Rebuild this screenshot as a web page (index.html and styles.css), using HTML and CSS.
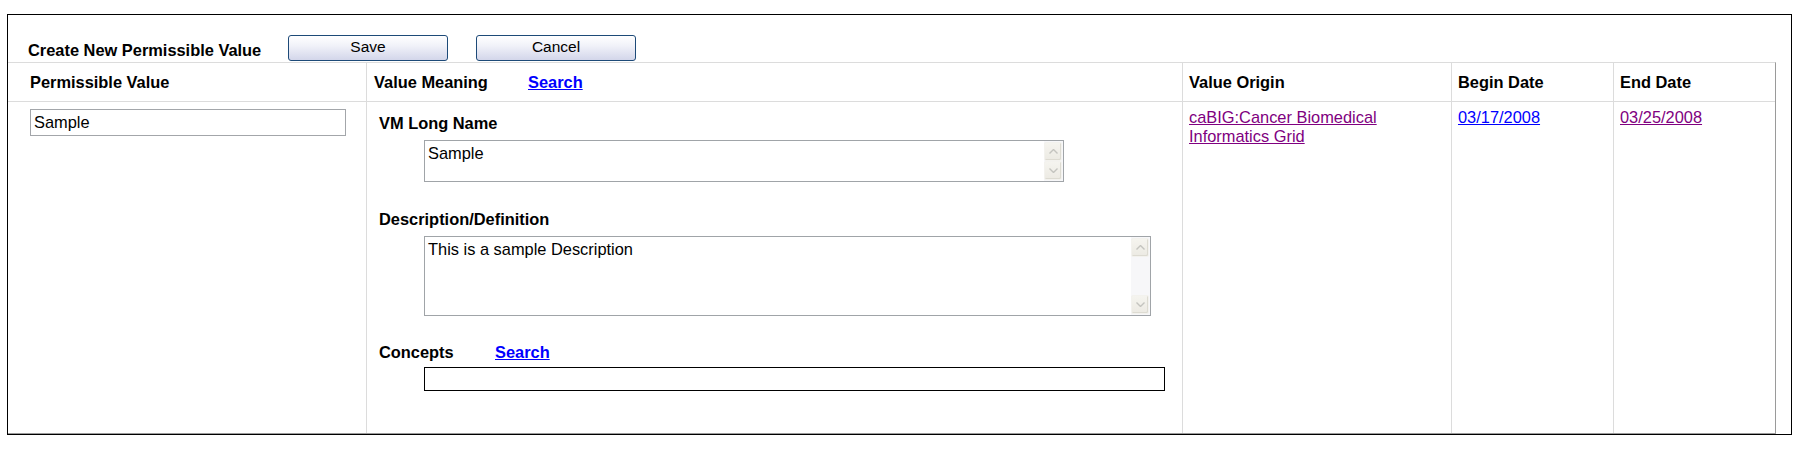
FILE: index.html
```html
<!DOCTYPE html>
<html>
<head>
<meta charset="utf-8">
<title>Create New Permissible Value</title>
<link rel="stylesheet" href="styles.css">
</head>
<body>
<div class="panel">
  <div class="toolbar">
    <span class="title">Create New Permissible Value</span>
    <button class="btn" type="button">Save</button>
    <button class="btn" type="button">Cancel</button>
  </div>
  <div class="grid">
    <div class="th c1">Permissible Value</div>
    <div class="th c2"><span class="vm-head">Value Meaning</span><a href="#" class="lnk bold">Search</a></div>
    <div class="th">Value Origin</div>
    <div class="th">Begin Date</div>
    <div class="th">End Date</div>

    <div class="td c1 pv-cell"><input class="pv" type="text" value="Sample"></div>
    <div class="td c2 vm-cell">
      <div class="lbl">VM Long Name</div>
      <div class="ta ta1">
        <textarea>Sample</textarea>
        <div class="sb">
          <div class="sbb"><svg width="9" height="5" viewBox="0 0 9 5"><polyline points="0.5,4.5 4.5,0.5 8.5,4.5" fill="none" stroke="#c4c4bf" stroke-width="1.4"/></svg></div>
          <div class="sbb"><svg width="9" height="5" viewBox="0 0 9 5"><polyline points="0.5,0.5 4.5,4.5 8.5,0.5" fill="none" stroke="#c4c4bf" stroke-width="1.4"/></svg></div>
        </div>
      </div>
      <div class="lbl desc-lbl">Description/Definition</div>
      <div class="ta ta2">
        <textarea>This is a sample Description</textarea>
        <div class="sb">
          <div class="sbb"><svg width="9" height="5" viewBox="0 0 9 5"><polyline points="0.5,4.5 4.5,0.5 8.5,4.5" fill="none" stroke="#c4c4bf" stroke-width="1.4"/></svg></div>
          <div class="sbb"><svg width="9" height="5" viewBox="0 0 9 5"><polyline points="0.5,0.5 4.5,4.5 8.5,0.5" fill="none" stroke="#c4c4bf" stroke-width="1.4"/></svg></div>
        </div>
      </div>
      <div class="lbl concepts"><span class="concepts-lbl">Concepts</span><a href="#" class="lnk bold">Search</a></div>
      <input class="concept-input" type="text" value="">
    </div>
    <div class="td link-cell"><a href="#" class="visited">caBIG:Cancer Biomedical Informatics Grid</a></div>
    <div class="td link-cell"><a href="#" class="lnk">03/17/2008</a></div>
    <div class="td link-cell"><a href="#" class="visited">03/25/2008</a></div>
  </div>
</div>
</body>
</html>
```

FILE: styles.css
```css
* {
  box-sizing: border-box;
}

html, body {
  margin: 0;
  padding: 0;
  background: #ffffff;
}

body {
  font-family: "Liberation Sans", Arial, sans-serif;
  font-size: 16.4px;
  color: #000;
}

.panel {
  margin: 14px 0 0 7px;
  width: 1785px;
  border: 1px solid #000;
}

.toolbar {
  height: 47px;
  display: flex;
  align-items: flex-end;
  padding: 0 0 1px 20px;
}

.title {
  width: 260px;
  font-weight: bold;
  line-height: 18px;
  margin-bottom: 2px;
}

.btn {
  width: 160px;
  height: 26px;
  margin-right: 28px;
  padding: 0 0 2px 0;
  border: 1px solid #1d4a78;
  border-radius: 3px;
  background: linear-gradient(to bottom, #ffffff 0%, #f1f2f9 40%, #d3d6ea 100%);
  font-family: "Liberation Sans", Arial, sans-serif;
  font-size: 15.5px;
  color: #000;
}

.grid {
  width: 1768px;
  display: grid;
  grid-template-columns: 358px 816px 269px 162px 162px;
  grid-template-rows: 38px 332px;
  border-top: 1px solid #dcdcdc;
  border-right: 1px solid #9a9a9a;
  border-bottom: 1px solid #9a9a9a;
}

.th {
  display: flex;
  align-items: center;
  padding-left: 6px;
  font-weight: bold;
  line-height: 18px;
  border-left: 1px solid #dcdcdc;
}

.th.c1 {
  border-left: none;
  padding-left: 22px;
}

.th.c2 {
  padding-left: 7px;
}

.vm-head {
  display: inline-block;
  width: 154px;
}

.td {
  border-top: 1px solid #dcdcdc;
  border-left: 1px solid #dcdcdc;
  line-height: 19px;
}

.td.c1 {
  border-left: none;
}

.pv-cell {
  padding: 7px 0 0 22px;
}

.pv {
  display: block;
  width: 316px;
  height: 27px;
  border: 1px solid #a3a6aa;
  padding: 0 3px;
  font-family: "Liberation Sans", Arial, sans-serif;
  font-size: 16.4px;
  color: #000;
  background: #fff;
}

.vm-cell {
  padding: 12px 0 0 12px;
}

.lbl {
  font-weight: bold;
  line-height: 18px;
  height: 18px;
  margin-bottom: 8px;
}

.desc-lbl {
  margin-top: 28px;
}

.concepts {
  display: flex;
  margin-top: 27px;
  margin-bottom: 6px;
}

.concepts-lbl {
  width: 116px;
}

.ta {
  display: flex;
  margin-left: 45px;
  border: 1px solid #a0a4a8;
  background: #fff;
}

.ta1 {
  width: 640px;
  height: 42px;
}

.ta2 {
  width: 727px;
  height: 80px;
}

.ta textarea {
  flex: 1;
  border: none;
  outline: none;
  resize: none;
  overflow: hidden;
  padding: 3px 3px;
  margin: 0;
  font-family: "Liberation Sans", Arial, sans-serif;
  font-size: 16.4px;
  line-height: 18px;
  color: #000;
  background: #fff;
}

.sb {
  width: 19px;
  display: flex;
  flex-direction: column;
  justify-content: space-between;
  padding: 1px 1px 1px 0;
  background: #f7f7f9;
}

.sbb {
  height: 19px;
  display: flex;
  align-items: center;
  justify-content: center;
  border: 1px solid #f3f2ee;
  border-radius: 2px;
  background: linear-gradient(to bottom, #f5f4ef 0%, #eceae3 100%);
  box-shadow: inset -1px -1px 0 #dddbd2;
}

.concept-input {
  display: block;
  margin-left: 45px;
  width: 741px;
  height: 24px;
  border: 1px solid #000;
  padding: 0 3px;
  font-family: "Liberation Sans", Arial, sans-serif;
  font-size: 16.4px;
  background: #fff;
}

.link-cell {
  padding: 6px 6px 0 6px;
}

.lnk {
  color: #0000ff;
  text-decoration: underline;
}

.bold {
  font-weight: bold;
}

.visited {
  color: #800080;
  text-decoration: underline;
}
```
